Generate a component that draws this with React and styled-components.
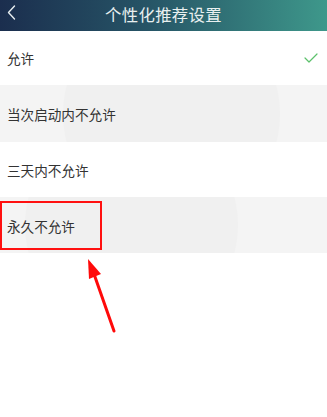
import React from 'react';
import styled, { createGlobalStyle } from 'styled-components';

const Global = createGlobalStyle`
  html, body {
    margin: 0;
    padding: 0;
    background: #fff;
    font-family: "Noto Sans CJK SC", "Noto Sans", sans-serif;
  }
`;

const options = [
    { label: '允许', checked: true, shade: false, h: 54 },
    { label: '当次启动内不允许', shade: true, h: 57, ripple: { left: 63, size: 217 } },
    { label: '三天内不允许', shade: false, h: 55 },
    { label: '永久不允许', shade: true, h: 56, ripple: { left: 25, size: 213 }, marked: true },
];

const App = () => (
    <S.Page>
        <Global />
        <S.Header>
            <S.Back>
                <svg width="9" height="15" viewBox="0 0 9 15" fill="none">
                    <path d="M7.5 1L1.5 7.5L7.5 14" stroke="#e8eef0" strokeWidth="1.4" strokeLinecap="round" strokeLinejoin="round" />
                </svg>
            </S.Back>
            <S.Title>个性化推荐设置</S.Title>
            <span />
        </S.Header>

        <S.List>
            {options.map((o) => (
                <S.Row key={o.label} $shade={o.shade} $h={o.h}>
                    {o.ripple && (
                        <S.Ripple
                            style={{ left: o.ripple.left, width: o.ripple.size, height: o.ripple.size }}
                        />
                    )}
                    <S.Label $marked={o.marked}>{o.label}</S.Label>
                    {o.checked && (
                        <svg width="14" height="10" viewBox="0 0 14 10" fill="none">
                            <path d="M1 5L5 9L13 1" stroke="#5cc16c" strokeWidth="1.2" strokeLinecap="round" strokeLinejoin="round" />
                        </svg>
                    )}
                </S.Row>
            ))}
        </S.List>

        <S.Arrow width="40" height="80" viewBox="0 0 40 80">
            <line x1="34" y1="77" x2="14" y2="20" stroke="#ff0a0a" strokeWidth="3" strokeLinecap="round" />
            <polygon points="8,5 21,20 9,25" fill="#ff0a0a" />
        </S.Arrow>
    </S.Page>
);

const S = {
    Page: styled.div`
        position: relative;
        width: 327px;
        height: 417px;
        overflow: hidden;
        background: #fff;
    `,
    Header: styled.div`
        height: 31px;
        display: grid;
        grid-template-columns: 24px 1fr 24px;
        align-items: center;
        background: linear-gradient(90deg, #1b2e4e 0%, #265466 45%, #3e988b 100%);
    `,
    Back: styled.div`
        display: flex;
        padding-left: 7px;
        margin-top: -6px;
    `,
    Title: styled.div`
        text-align: center;
        color: #e9f0f0;
        font-size: 16.4px;
        letter-spacing: 0.3px;
        margin-top: -4px;
    `,
    List: styled.div`
        display: flex;
        flex-direction: column;
    `,
    Row: styled.div`
        position: relative;
        height: ${({ $h }) => $h}px;
        padding: 0 9px 0 7px;
        display: flex;
        align-items: center;
        justify-content: space-between;
        overflow: hidden;
        background: ${({ $shade }) => ($shade ? '#f4f4f4' : '#ffffff')};
    `,
    Ripple: styled.div`
        position: absolute;
        top: 50%;
        transform: translateY(-50%);
        border-radius: 50%;
        background: #f0f0f0;
    `,
    Label: styled.span`
        position: relative;
        font-size: 13.6px;
        color: #333;
        ${({ $marked }) =>
            $marked &&
            `
            box-sizing: border-box;
            display: flex;
            align-items: center;
            margin-left: -7px;
            margin-top: 1px;
            padding-left: 5px;
            width: 102px;
            height: 49px;
            border: 2px solid #ff1010;
        `}
    `,
    Arrow: styled.svg`
        position: absolute;
        left: 80px;
        top: 254px;
    `,
};

export default App;
